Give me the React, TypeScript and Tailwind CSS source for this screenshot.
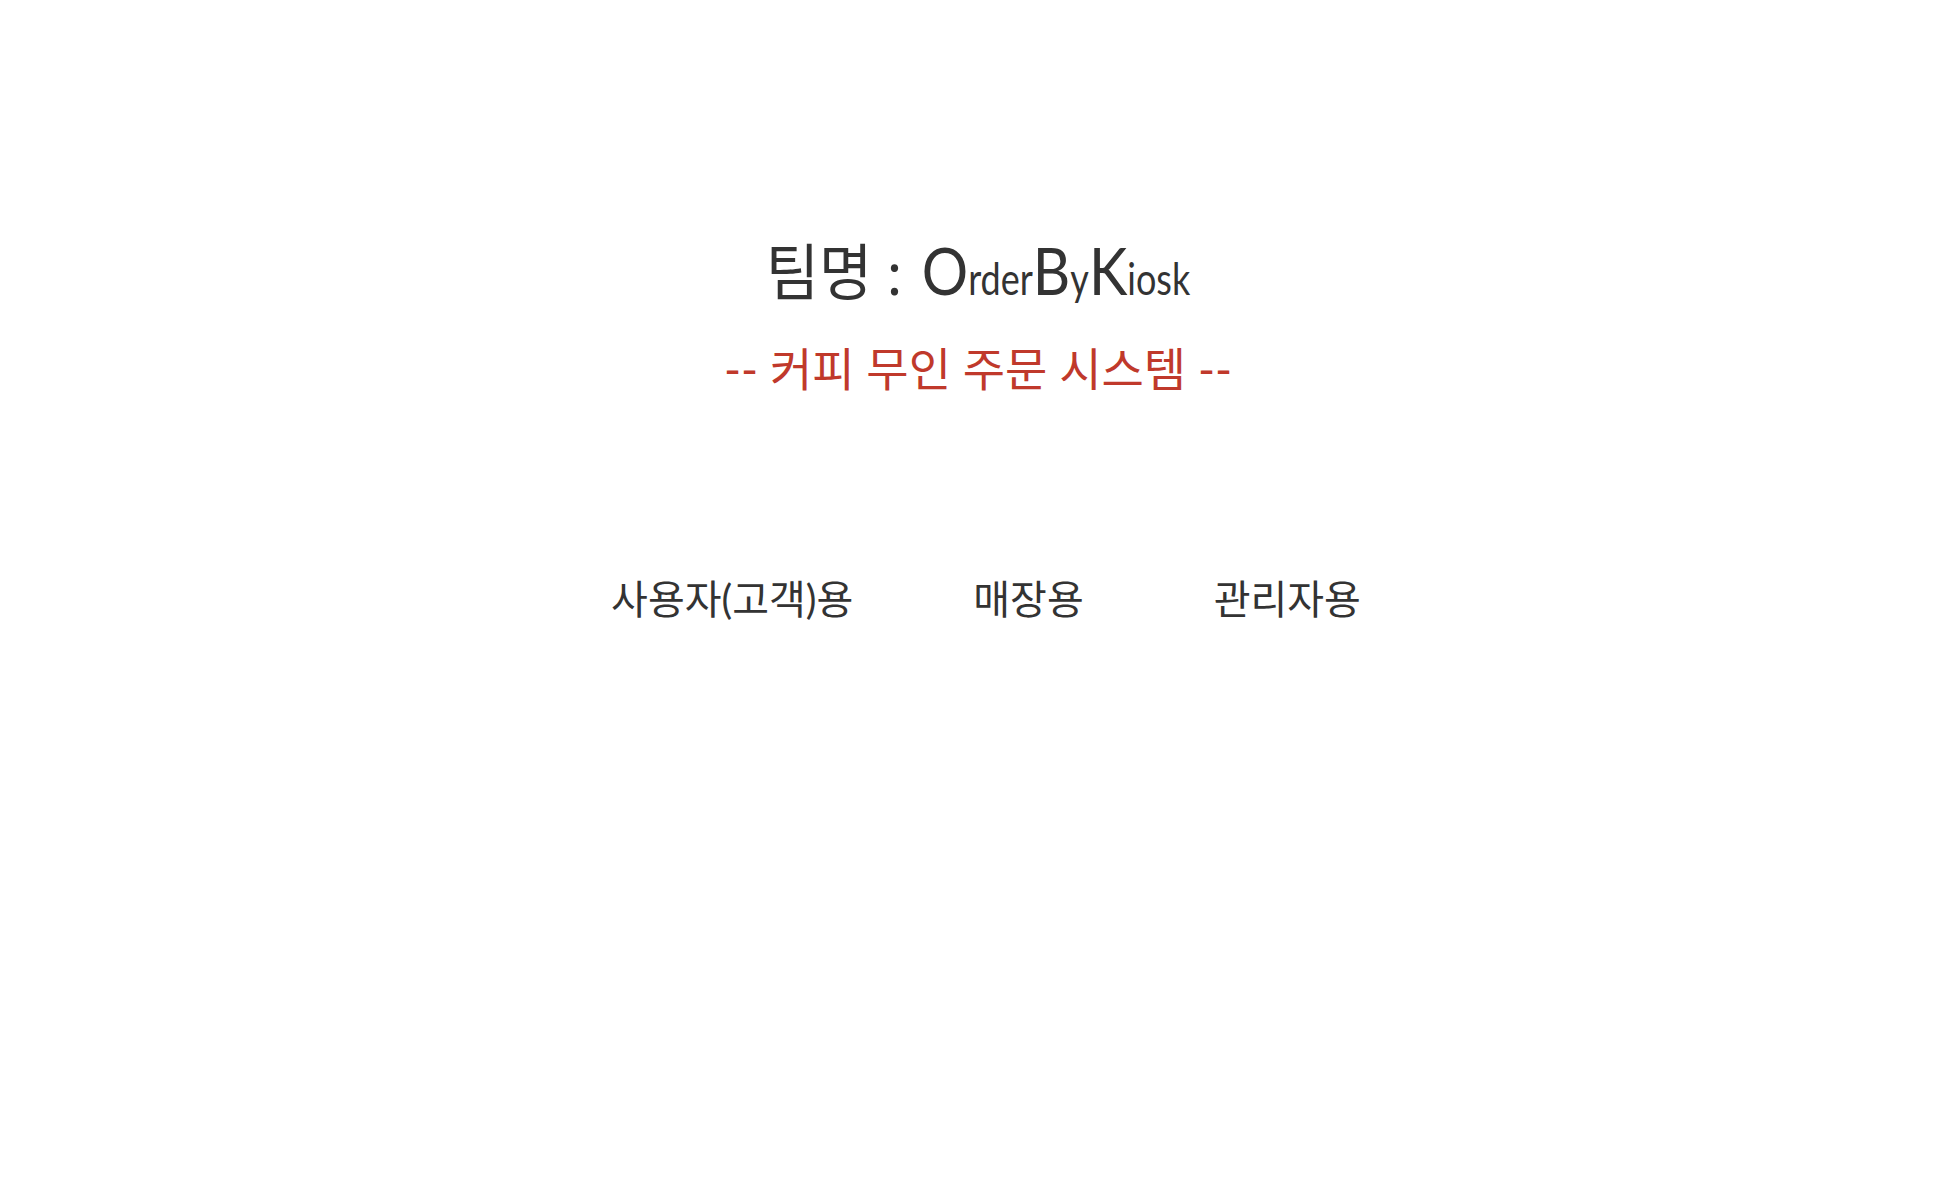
import React from "react";

const latin = "font-['Lato','Noto_Sans_CJK_KR',sans-serif]";

// title letters are drawn a bit taller than the font gives
const ko = "inline-block leading-none origin-[50%_89%] scale-y-[1.06] mr-[5px]";
const cap = "inline-block leading-none origin-[50%_89%] scale-y-[1.12]";
const low = "inline-block leading-none origin-[50%_89%] scale-y-[1.25] text-[36px]";

export default function App() {
  return (
    <div className={`min-h-screen bg-white text-[#333333] ${latin}`}>
      <div className="flex flex-col items-center pt-[237px]">
        <h1 className="text-[58px] leading-[72px] font-normal">
          <span className={ko}>팀명 :</span>{" "}
          <span className={cap}>O</span>
          <span className={low}>rder</span>
          <span className={cap}>B</span>
          <span className={low}>y</span>
          <span className={cap}>K</span>
          <span className={low}>iosk</span>
        </h1>
        <h2 className="mt-[32px] text-[46px] leading-[56px] text-[#c0392b]">
          -- 커피 무인 주문 시스템 --
        </h2>
      </div>
      <div className="mt-[178px] flex justify-center pl-[16px]">
        <button className="text-[40px] leading-[48px] text-[#333333]">사용자(고객)용</button>
        <button className="ml-[120px] text-[40px] leading-[48px] text-[#333333]">매장용</button>
        <button className="ml-[130px] text-[40px] leading-[48px] text-[#333333]">관리자용</button>
      </div>
    </div>
  );
}
